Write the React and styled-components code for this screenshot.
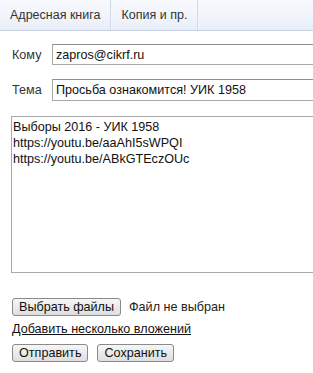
import React from 'react'
import styled, { createGlobalStyle } from 'styled-components';

const Global = createGlobalStyle`
  body {
    margin: 0;
    background: #fff;
    font-family: "Liberation Sans", Arial, sans-serif;
    font-size: 12.6px;
    color: #222;
  }
`;

const Page = styled.div`
  width: 313px;
  height: 373px;
  overflow: hidden;
`;

const TabBar = styled.div`
  display: flex;
  height: 30px;
  border-bottom: 1px solid #c7d0e0;
  background: linear-gradient(#f9fafe, #e9eef8);
`;

const Tab = styled.div`
  padding: 0 10px;
  line-height: 30px;
  font-size: 12.5px;
  color: #333;
  border-right: 1px solid #d3d9e6;
  box-shadow: 1px 0 0 #f4f6fb;
`;

const Form = styled.div`
  padding: 13px 0 0 11px;
`;

const Row = styled.div`
  display: flex;
  align-items: center;
  margin-bottom: ${p => p.$gap || 0}px;
`;

const Label = styled.label`
  flex-shrink: 0;
  width: 40px;
  padding-left: 1px;
  color: #333;
`;

const TextInput = styled.input`
  flex-shrink: 0;
  box-sizing: border-box;
  width: 300px;
  height: ${p => p.$h}px;
  padding: 0 3px;
  border: 1px solid #a9a9a9;
  border-top-color: #8f8f8f;
  font: 12.6px "Liberation Sans", Arial, sans-serif;
  color: #111;
`;

const Body = styled.textarea`
  box-sizing: border-box;
  display: block;
  width: 320px;
  height: 157px;
  margin-top: 15px;
  padding: 2px 1px;
  border: 1px solid #a9a9a9;
  font: 12.6px/16px "Liberation Sans", Arial, sans-serif;
  color: #111;
  resize: none;
`;

const FileRow = styled.div`
  display: flex;
  align-items: center;
  gap: 8px;
  margin-top: 25px;
  padding-left: 1px;
`;

const Button = styled.button`
  box-sizing: border-box;
  height: 18px;
  padding: 0 6px;
  border: 1px solid #8a8a8a;
  border-radius: 3px;
  background: linear-gradient(#f6f6f6, #dedede);
  font: 12.6px "Liberation Sans", Arial, sans-serif;
  color: #111;
  line-height: 16px;
`;

const Note = styled.span`
  color: #222;
`;

const Link = styled.a`
  display: block;
  margin-top: 5px;
  padding-left: 1px;
  color: #111;
  text-decoration: underline;
  line-height: 16px;
`;

const Actions = styled.div`
  display: flex;
  gap: 9px;
  margin-top: 7px;
  padding-left: 1px;
`;

const App = () => {
  return (
    <Page>
      <Global />
      <TabBar>
        <Tab>Адресная книга</Tab>
        <Tab>Копия и пр.</Tab>
      </TabBar>
      <Form>
        <Row $gap={14}>
          <Label>Кому</Label>
          <TextInput $h={21} defaultValue="zapros@cikrf.ru" />
        </Row>
        <Row>
          <Label>Тема</Label>
          <TextInput $h={22} defaultValue="Просьба ознакомится! УИК 1958" />
        </Row>
        <Body defaultValue={'Выборы 2016 - УИК 1958\nhttps://youtu.be/aaAhI5sWPQI\nhttps://youtu.be/ABkGTEczOUc'} />
        <FileRow>
          <Button>Выбрать файлы</Button>
          <Note>Файл не выбран</Note>
        </FileRow>
        <Link>Добавить несколько вложений</Link>
        <Actions>
          <Button>Отправить</Button>
          <Button>Сохранить</Button>
        </Actions>
      </Form>
    </Page>
  )
}

export default App
